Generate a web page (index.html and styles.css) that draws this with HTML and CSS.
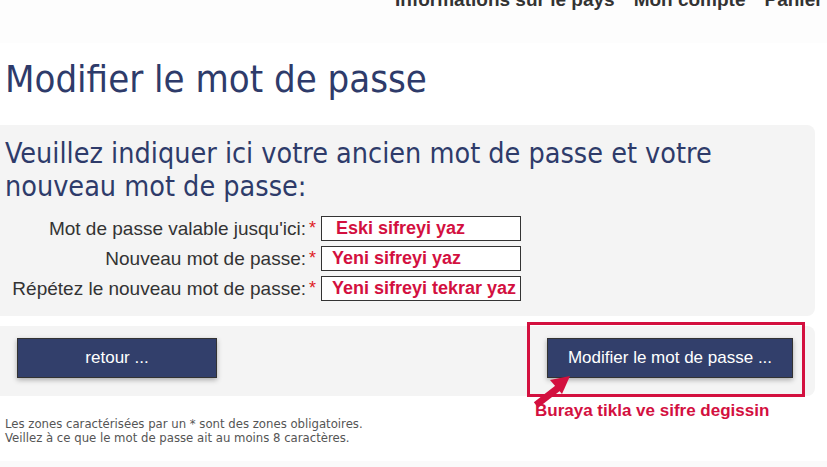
FILE: index.html
```html
<!DOCTYPE html>
<html lang="fr">
<head>
    <meta charset="UTF-8">
    <title>Modifier le mot de passe</title>
    <link rel="stylesheet" href="styles.css">
</head>
<body>

<header class="topbar">
    <nav class="topnav">
        <a href="#">Informations sur le pays</a>
        <a href="#">Mon compte</a>
        <a href="#">Panier</a>
    </nav>
</header>

<main class="page">
    <h1 class="titre">Modifier le mot de passe</h1>

    <section class="panneau">
        <h2>Veuillez indiquer ici votre ancien mot de passe et votre nouveau mot de passe:</h2>
        <form class="formulaire">
            <div class="ligne">
                <label>Mot de passe valable jusqu'ici:</label><span class="etoile">*</span>
                <div class="champ"><span class="note note-eski">Eski sifreyi yaz</span></div>
            </div>
            <div class="ligne">
                <label>Nouveau mot de passe:</label><span class="etoile">*</span>
                <div class="champ"><span class="note">Yeni sifreyi yaz</span></div>
            </div>
            <div class="ligne">
                <label>Répétez le nouveau mot de passe:</label><span class="etoile">*</span>
                <div class="champ"><span class="note">Yeni sifreyi tekrar yaz</span></div>
            </div>
        </form>
    </section>

    <section class="panneau actions">
        <button class="bouton">retour ...</button>
        <div class="cadre">
            <button class="bouton bouton-large">Modifier le mot de passe ...</button>
            <svg class="fleche" width="44" height="34" viewBox="0 0 44 34">
                <path d="M4 30 L26 13" stroke="#d3103f" stroke-width="7" fill="none"/>
                <path d="M18 5 L38 1 L30 19 Z" fill="#d3103f"/>
            </svg>
            <span class="indice">Buraya tikla ve sifre degissin</span>
        </div>
    </section>

    <p class="aide">
        Les zones caractérisées par un * sont des zones obligatoires.<br>
        Veillez à ce que le mot de passe ait au moins 8 caractères.
    </p>
</main>

</body>
</html>
```

FILE: styles.css
```css
body {
    margin: 0;
    background: #fafafa;
    font-family: "Liberation Sans", Arial, sans-serif;
}
.topbar {
    height: 43px;
    background: #fdfdfd;
    box-shadow: 0 2px 4px rgba(0, 0, 0, 0.15);
    overflow: hidden;
}
.topnav {
    display: flex;
    gap: 19px;
    padding-left: 395px;
    margin-top: -11px;
}
.topnav a {
    color: #333;
    font-weight: bold;
    font-size: 19px;
    text-decoration: none;
    white-space: nowrap;
}
.page {
    background: #fff;
    padding-top: 12px;
    padding-bottom: 16px;
}
.titre {
    margin: 0 0 22px 5px;
    font-family: "DejaVu Sans Condensed", sans-serif;
    font-weight: normal;
    font-size: 38px;
    color: #2e3b6a;
    line-height: 48px;
}
.panneau {
    background: #f4f4f4;
    width: 815px;
    border-radius: 0 8px 8px 0;
}
.panneau h2 {
    margin: 0;
    max-width: 735px;
    padding: 12px 0 0 5px;
    font-family: "DejaVu Sans Condensed", sans-serif;
    font-weight: normal;
    font-size: 28.5px;
    line-height: 33px;
    color: #2e3b6a;
}
.formulaire {
    padding: 13px 0 10px;
}
.ligne {
    display: flex;
    align-items: center;
    margin-bottom: 5px;
}
.ligne label {
    width: 306px;
    text-align: right;
    font-size: 19px;
    color: #333;
}
.etoile {
    width: 15px;
    color: #e0201f;
    font-size: 18px;
    padding-left: 3px;
    box-sizing: border-box;
}
.champ {
    width: 198px;
    height: 23px;
    border: 1px solid #333;
    background: #fff;
    display: flex;
    align-items: center;
}
.note {
    color: #d3103f;
    font-weight: bold;
    font-size: 18px;
    padding-left: 10px;
    white-space: nowrap;
}
.note-eski {
    padding-left: 14px;
}
.actions {
    margin-top: 10px;
    height: 70px;
    display: flex;
    align-items: flex-start;
    justify-content: space-between;
    padding: 12px 0 0 17px;
    box-sizing: border-box;
}
.bouton {
    width: 200px;
    height: 40px;
    background: #323f6b;
    color: #fff;
    border: 1px solid #333;
    font-family: "Liberation Sans", Arial, sans-serif;
    font-size: 17px;
    box-shadow: 0 2px 5px rgba(0, 0, 0, 0.3);
}
.bouton-large {
    width: 246px;
}
.cadre {
    position: relative;
    width: 255px;
    height: 56px;
    margin: -16px 10px 0 0;
    border: 3px solid #d3103f;
    display: flex;
    align-items: flex-start;
    padding: 13px 0 0 17px;
}
.fleche {
    position: absolute;
    left: 2px;
    top: 50px;
}
.indice {
    position: absolute;
    left: 5px;
    top: 76px;
    color: #d3103f;
    font-weight: bold;
    font-size: 17px;
    white-space: nowrap;
}
.aide {
    margin: 21px 0 0 5px;
    font-family: "DejaVu Sans Condensed", sans-serif;
    font-size: 13px;
    line-height: 14px;
    color: #555;
}
```
